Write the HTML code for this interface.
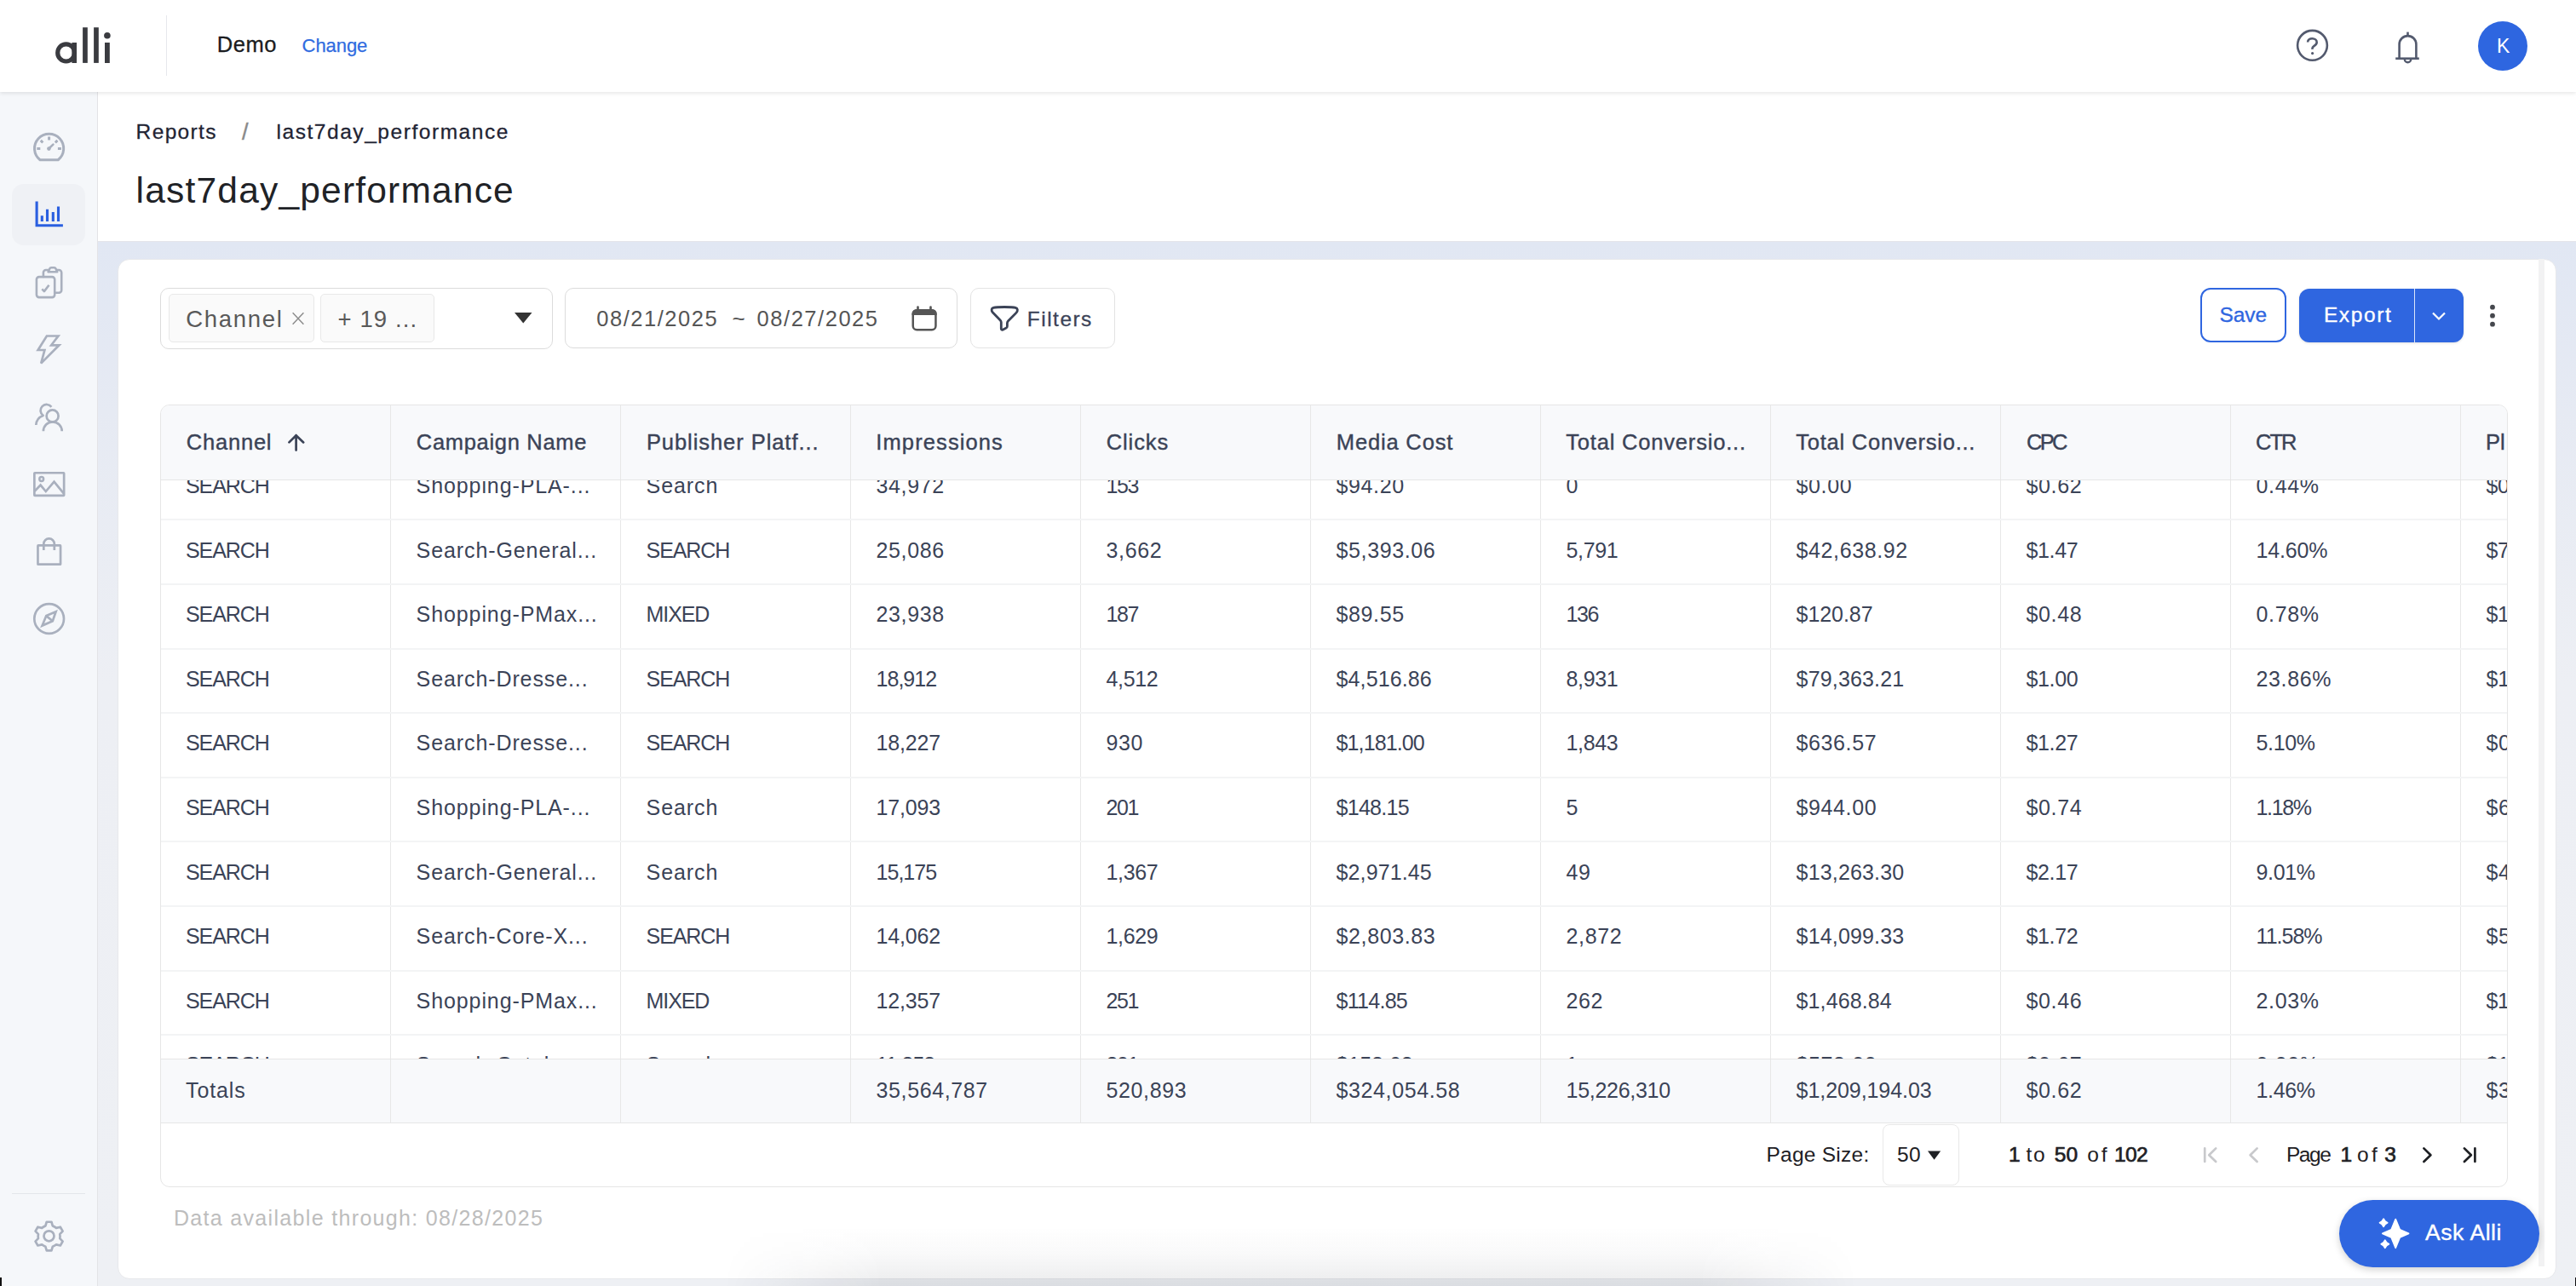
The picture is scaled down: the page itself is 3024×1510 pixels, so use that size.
<!DOCTYPE html><html><head><meta charset="utf-8"><style>
*{box-sizing:border-box;margin:0;padding:0}
html,body{width:3024px;height:1510px;overflow:hidden;background:#eef0f4;font-family:"Liberation Sans", sans-serif;}
.a{position:absolute}
.t{position:absolute;white-space:nowrap;line-height:1}
</style></head><body><div class="a" style="left:114px;top:284px;width:2910px;height:1226px;background:linear-gradient(180deg,#e1e7f3 0px,#e6eaf3 200px,#edeff4 520px,#eef0f4 1226px)"></div>
<div class="a" style="left:114px;top:108px;width:2910px;height:176px;background:#fff;border-bottom:1px solid #e4e5ea"></div>
<div class="a" style="left:0;top:108px;width:115px;height:1402px;background:#f5f7fa;border-right:1.5px solid #e3e3e6"></div>
<div class="a" style="left:0;top:0;width:3024px;height:108px;background:#fff;box-shadow:0 1px 5px rgba(0,0,0,0.12)"></div>
<svg class="a" style="left:0;top:0" width="200" height="108" viewBox="0 0 200 108">
<g fill="#3a3b40"><ellipse cx="77.6" cy="61.9" rx="9.9" ry="10.1" fill="none" stroke="#3a3b40" stroke-width="5.2"/>
<rect x="84.4" y="50" width="5.6" height="24"/><rect x="97.1" y="32.2" width="5.7" height="41.7"/><rect x="110.1" y="32.2" width="5.7" height="41.7"/>
<rect x="123" y="50" width="5.8" height="24"/><circle cx="125.9" cy="41.7" r="3.8"/></g></svg>
<div class="a" style="left:194.5px;top:18px;width:1.5px;height:71px;background:#e6e8ec"></div>
<div class="t" style="left:254.70px;top:39.91px;font-size:25.5px;letter-spacing:0.57px;color:#1b1c20;-webkit-text-stroke:0.3px #1b1c20">Demo</div>
<div class="t" style="left:354.60px;top:42.87px;font-size:22px;letter-spacing:-0.06px;color:#2f6be0;-webkit-text-stroke:0.25px #2f6be0">Change</div>
<svg class="a" style="left:2690px;top:29px" width="50" height="50" viewBox="0 0 50 50">
<circle cx="24.5" cy="24.3" r="17.4" fill="none" stroke="#535a6e" stroke-width="2.6"/>
<path d="M19.1 20.6C19.1 17.8 21.5 16.3 24.4 16.3C27.4 16.3 29.7 18.1 29.7 20.7C29.7 23.2 27.6 24.3 26 25.3C24.8 26.1 24.4 27 24.3 28.9" fill="none" stroke="#535a6e" stroke-width="2.6" stroke-linecap="butt"/>
<circle cx="24.6" cy="33.6" r="1.6" fill="#535a6e"/></svg>
<svg class="a" style="left:2800px;top:30px" width="52" height="50" viewBox="0 0 52 50" fill="none" stroke="#535a6e" stroke-width="2.6">
<path d="M16.6 38.5V22A9.9 9.9 0 0 1 36.4 22V38.5"/>
<path d="M12.2 38.7H39.8"/>
<path d="M26.5 12.2V7.6"/>
<path d="M22.8 39.6a3.7 3.7 0 0 0 7.4 0" stroke-width="2.4"/></svg>
<div class="a" style="left:2909px;top:25px;width:58px;height:58px;border-radius:50%;background:#2e66e0"></div>
<div class="t" style="left:2931.10px;top:42.73px;font-size:23.00px;color:#fff;">K</div>
<div class="a" style="left:14px;top:216px;width:86px;height:72px;border-radius:14px;background:#eff1f5"></div>
<svg class="a" style="left:0;top:108px" width="114" height="1402" viewBox="0 108 114 1402" fill="none" stroke="#a9b0be" stroke-width="2.8" stroke-linecap="round" stroke-linejoin="round">
<!-- gauge -->
<path d="M47 187.8A17.1 17.1 0 1 1 68.2 187.8Z" stroke-width="3"/>
<path d="M57.6 160.6v3.9M47.8 164.9l2.5 2.6M67.4 164.9l-2.5 2.6M43.3 174.6h4M67.9 174.6h4" stroke-width="3" stroke-linecap="butt"/>
<path d="M57.8 174l4.6-4.4" stroke-width="2.6"/>
<circle cx="57.4" cy="174.6" r="2.3" fill="#a9b0be" stroke="none"/>
<!-- chart (active) -->
<g stroke="#2a5fe0" stroke-width="3.1" stroke-linecap="butt" stroke-linejoin="miter"><path d="M43.1 236.5V264.7H73.9"/><path d="M49.3 259.9v-6.7M55.5 259.9v-14.1M62.3 259.9v-10.8M68.5 259.9v-17.4"/></g>
<!-- clipboard -->
<rect x="42.9" y="325.1" width="21.3" height="24" rx="3" stroke-width="2.6"/>
<path d="M50.9 325V320a3 3 0 0 1 3-3H56.5M66.8 317H69.2a3 3 0 0 1 3 3V340.7a3 3 0 0 1-3 3H64.5" stroke-width="2.6"/>
<path d="M56.6 319.3h10.6l-1.7-3.8a2 2 0 0 0-1.8-1.2h-3.6a2 2 0 0 0-1.8 1.2z" stroke-width="2.6"/>
<path d="M49.3 339.4l2.6 2.7 5.6-7.4" stroke-width="2.6" stroke-linecap="butt"/>
<!-- bolt -->
<path d="M54.9 394.5H68.4L60.2 405.3H69.4L48.2 426.6L52.4 411H44.6Z" stroke-width="2.7" stroke-linejoin="miter" stroke-miterlimit="3"/>
<!-- users -->
<g stroke-width="2.7" stroke-linecap="butt">
<circle cx="61.6" cy="488.4" r="7"/>
<path d="M50.9 506.2A10.9 10.9 0 0 1 72.7 506.2"/>
<path d="M60.4 477.9A7.1 7.1 0 1 0 50.6 487.9C45 490 42.5 494 42.3 499"/>
</g>
<!-- image -->
<g stroke-width="2.7" stroke-linejoin="miter" stroke-linecap="butt">
<rect x="40.35" y="555.25" width="34.8" height="26.7" rx="0.6"/>
<circle cx="48.7" cy="562.5" r="2.4" stroke-width="2.5"/>
<path d="M40.6 576.8L47.6 569.6 53.8 577 63.5 565.6 75 579.6"/>
</g>
<!-- bag -->
<g stroke-width="2.7" stroke-linejoin="miter" stroke-linecap="butt">
<rect x="44.45" y="640.45" width="26.6" height="22.2" rx="0.5"/>
<path d="M51.3 645.9V638.6a6.25 6.25 0 0 1 12.5 0V645.9"/>
</g>
<!-- compass -->
<g stroke-width="2.7" stroke-linejoin="miter" stroke-linecap="butt">
<circle cx="57.65" cy="726.5" r="17.35"/>
<path d="M65.6 718.2L54.3 723.1 49.6 734.6 61.8 729.2Z"/>
<path d="M54.3 723.1L61.8 729.2"/>
</g>
<!-- gear -->
<path d="M53.40 1439.40L54.78 1434.73L60.42 1434.73L61.80 1439.40A12.9 12.9 0 0 1 66.06 1441.86L70.79 1440.72L73.62 1445.61L70.26 1449.14A12.9 12.9 0 0 1 70.26 1454.06L73.62 1457.59L70.79 1462.48L66.06 1461.34A12.9 12.9 0 0 1 61.80 1463.80L60.42 1468.47L54.78 1468.47L53.40 1463.80A12.9 12.9 0 0 1 49.14 1461.34L44.41 1462.48L41.58 1457.59L44.94 1454.06A12.9 12.9 0 0 1 44.94 1449.14L41.58 1445.61L44.41 1440.72L49.14 1441.86A12.9 12.9 0 0 1 53.40 1439.40Z" stroke-width="2.7" stroke-linejoin="round"/>
<circle cx="57.5" cy="1451.3" r="6" stroke-width="2.7"/>
</svg>
<div class="a" style="left:14px;top:1400.5px;width:86px;height:1.5px;background:#e3e6eb"></div>
<div class="t" style="left:159.60px;top:143.26px;font-size:24.5px;letter-spacing:1.36px;color:#1f2433;-webkit-text-stroke:0.3px #1f2433">Reports</div>
<div class="t" style="left:283.90px;top:142.44px;font-size:27.00px;color:#8a8a8a;-webkit-text-stroke:0.4px #8a8a8a">/</div>
<div class="t" style="left:324.50px;top:143.26px;font-size:24.5px;letter-spacing:1.55px;color:#1f2433;-webkit-text-stroke:0.3px #1f2433">last7day_performance</div>
<div class="t" style="left:159.60px;top:202.62px;font-size:42.5px;letter-spacing:1.19px;color:#202226;">last7day_performance</div>
<div class="a" style="left:138px;top:303.5px;width:2863px;height:1198.5px;border-radius:14px;background:#fff;border:1px solid #e7e8eb"></div>
<div class="a" style="left:2980px;top:304px;width:7px;height:1183px;background:#f2f2f3"></div>
<div class="a" style="left:188px;top:338px;width:461px;height:72px;border:1.5px solid #dcdcdc;border-radius:10px;background:#fff"></div>
<div class="a" style="left:198px;top:345px;width:171px;height:57px;border:1.5px solid #e8e8e8;border-radius:5px;background:#fafafa"></div>
<div class="a" style="left:376px;top:345px;width:134px;height:57px;border:1.5px solid #e8e8e8;border-radius:5px;background:#fafafa"></div>
<div class="t" style="left:218.30px;top:360.82px;font-size:27.5px;letter-spacing:1.68px;color:#595959;">Channel</div>
<svg class="a" style="left:340px;top:364px" width="20" height="20" viewBox="0 0 20 20"><path d="M3.6 3.2l12.8 13.6M16.4 3.2L3.6 16.8" stroke="#8a8a8a" stroke-width="1.4"/></svg>
<div class="t" style="left:396.50px;top:360.82px;font-size:27.5px;letter-spacing:1.12px;color:#595959;">+ 19 ...</div>
<svg class="a" style="left:604px;top:367px" width="21" height="13" viewBox="0 0 21 13"><path d="M0 0h20.5L10.25 12.5z" fill="#333"/></svg>
<div class="a" style="left:663px;top:338px;width:461px;height:71px;border:1.5px solid #dcdcdc;border-radius:10px;background:#fff"></div>
<div class="t" style="left:700.30px;top:361.71px;font-size:25.5px;letter-spacing:1.52px;color:#555;">08/21/2025</div>
<div class="t" style="left:859.60px;top:361.29px;font-size:26.00px;color:#555;">~</div>
<div class="t" style="left:888.60px;top:361.71px;font-size:25.5px;letter-spacing:1.53px;color:#555;">08/27/2025</div>
<svg class="a" style="left:1068px;top:357px" width="34" height="34" viewBox="1068 357 34 34">
<rect x="1071.75" y="364.25" width="26.7" height="23" rx="4.5" fill="none" stroke="#555" stroke-width="2.5"/>
<path d="M1070.5 368.5a5.5 5.5 0 0 1 5.5-5.5h18.2a5.5 5.5 0 0 1 5.5 5.5v1.4h-29.2z" fill="#555"/>
<path d="M1077.5 360.6v3.6M1092.5 360.6v3.6" stroke="#555" stroke-width="2.6" stroke-linecap="round"/></svg>
<div class="a" style="left:1139px;top:338px;width:170px;height:71px;border:1.5px solid #e3e3e3;border-radius:10px;background:#fff"></div>
<svg class="a" style="left:1160px;top:356px" width="38" height="36" viewBox="1160 356 38 36"><path d="M1166 361.3C1170.5 360.2 1188 360.2 1192.3 361.3C1194.9 362 1195 365.1 1193.1 367.1L1183.6 376.7C1182.8 377.5 1182.4 378.4 1182.4 379.5V382.9C1182.4 384 1181.8 384.9 1180.9 385.3L1177.1 387.2C1176.1 387.7 1175.3 387.1 1175.3 386V378.6C1175.3 377.5 1174.9 376.6 1174.2 375.9L1165.5 367.1C1163.5 365.1 1163.6 362 1166 361.3Z" fill="none" stroke="#3b4357" stroke-width="2.8" stroke-linejoin="round"/></svg>
<div class="t" style="left:1205.80px;top:362.56px;font-size:24.5px;letter-spacing:1.48px;color:#3b4357;-webkit-text-stroke:0.3px #3b4357">Filters</div>
<div class="a" style="left:2583px;top:338px;width:101px;height:64px;border:2px solid #2f66e0;border-radius:12px;background:#fff"></div>
<div class="t" style="left:2605.40px;top:358.46px;font-size:24.5px;letter-spacing:-0.02px;color:#2f66e0;-webkit-text-stroke:0.35px #2f66e0">Save</div>
<div class="a" style="left:2699px;top:339px;width:193px;height:63px;border-radius:12px;background:#2f66e0;box-shadow:0 1px 3px rgba(0,0,0,0.12)"></div>
<div class="a" style="left:2834px;top:339px;width:1px;height:63px;background:#dce5fa"></div>
<div class="t" style="left:2727.90px;top:358.46px;font-size:24.5px;letter-spacing:1.62px;color:#fff;-webkit-text-stroke:0.35px #fff">Export</div>
<svg class="a" style="left:2853px;top:364px" width="20" height="14" viewBox="0 0 20 14"><path d="M3 3.5l7 7 7-7" fill="none" stroke="#fff" stroke-width="2.2"/></svg>
<svg class="a" style="left:2918px;top:354px" width="16" height="34" viewBox="0 0 16 34"><g fill="#45474d"><circle cx="8" cy="6.7" r="2.9"/><circle cx="8" cy="16.7" r="2.9"/><circle cx="8" cy="26.7" r="2.9"/></g></svg>
<div class="a" style="left:188px;top:475px;width:2756px;height:919px;border:1px solid #e6e6e6;border-radius:11px;background:#fff;overflow:hidden">
<div class="a" style="left:0;top:0;width:3000px;height:87px;background:#f8f9fb;z-index:2"></div>
<div class="a" style="left:0;top:88px;width:3000px;height:679px;overflow:hidden">
<div class="a" style="left:269px;top:0;width:1px;height:2000px;background:#e7e7e7"></div>
<div class="a" style="left:539px;top:0;width:1px;height:2000px;background:#e7e7e7"></div>
<div class="a" style="left:809px;top:0;width:1px;height:2000px;background:#e7e7e7"></div>
<div class="a" style="left:1079px;top:0;width:1px;height:2000px;background:#e7e7e7"></div>
<div class="a" style="left:1349px;top:0;width:1px;height:2000px;background:#e7e7e7"></div>
<div class="a" style="left:1619px;top:0;width:1px;height:2000px;background:#e7e7e7"></div>
<div class="a" style="left:1889px;top:0;width:1px;height:2000px;background:#e7e7e7"></div>
<div class="a" style="left:2159px;top:0;width:1px;height:2000px;background:#e7e7e7"></div>
<div class="a" style="left:2429px;top:0;width:1px;height:2000px;background:#e7e7e7"></div>
<div class="a" style="left:2699px;top:0;width:1px;height:2000px;background:#e7e7e7"></div>
<div class="a" style="left:0;top:45.30px;width:3000px;height:2px;background:#f3f4f5"></div>
<div class="t" style="left:29.00px;top:-5.97px;font-size:25px;letter-spacing:-1.10px;color:#3b4357;">SEARCH</div>
<div class="t" style="left:299.60px;top:-5.97px;font-size:25px;letter-spacing:0.90px;color:#3b4357;">Shopping-PLA-...</div>
<div class="t" style="left:569.60px;top:-5.97px;font-size:25px;letter-spacing:0.90px;color:#3b4357;">Search</div>
<div class="t" style="left:839.60px;top:-5.97px;font-size:25px;letter-spacing:0.60px;color:#3b4357;">34,972</div>
<div class="t" style="left:1109.60px;top:-5.97px;font-size:25px;letter-spacing:-1.40px;color:#3b4357;">153</div>
<div class="t" style="left:1379.60px;top:-5.97px;font-size:25px;letter-spacing:0.60px;color:#3b4357;">$94.20</div>
<div class="t" style="left:1649.60px;top:-5.97px;font-size:25px;letter-spacing:0.60px;color:#3b4357;">0</div>
<div class="t" style="left:1919.60px;top:-5.97px;font-size:25px;letter-spacing:0.60px;color:#3b4357;">$0.00</div>
<div class="t" style="left:2189.60px;top:-5.97px;font-size:25px;letter-spacing:0.60px;color:#3b4357;">$0.62</div>
<div class="t" style="left:2459.60px;top:-5.97px;font-size:25px;letter-spacing:0.60px;color:#3b4357;">0.44%</div>
<div class="t" style="left:2729.60px;top:-5.97px;font-size:25px;letter-spacing:-0.40px;color:#3b4357;">$0.18</div>
<div class="a" style="left:0;top:120.90px;width:3000px;height:2px;background:#f3f4f5"></div>
<div class="t" style="left:29.00px;top:69.63px;font-size:25px;letter-spacing:-1.10px;color:#3b4357;">SEARCH</div>
<div class="t" style="left:299.60px;top:69.63px;font-size:25px;letter-spacing:0.90px;color:#3b4357;">Search-General...</div>
<div class="t" style="left:569.60px;top:69.63px;font-size:25px;letter-spacing:-1.10px;color:#3b4357;">SEARCH</div>
<div class="t" style="left:839.60px;top:69.63px;font-size:25px;letter-spacing:0.60px;color:#3b4357;">25,086</div>
<div class="t" style="left:1109.60px;top:69.63px;font-size:25px;letter-spacing:0.60px;color:#3b4357;">3,662</div>
<div class="t" style="left:1379.60px;top:69.63px;font-size:25px;letter-spacing:0.60px;color:#3b4357;">$5,393.06</div>
<div class="t" style="left:1649.60px;top:69.63px;font-size:25px;letter-spacing:-0.40px;color:#3b4357;">5,791</div>
<div class="t" style="left:1919.60px;top:69.63px;font-size:25px;letter-spacing:0.60px;color:#3b4357;">$42,638.92</div>
<div class="t" style="left:2189.60px;top:69.63px;font-size:25px;letter-spacing:-0.40px;color:#3b4357;">$1.47</div>
<div class="t" style="left:2459.60px;top:69.63px;font-size:25px;letter-spacing:-0.20px;color:#3b4357;">14.60%</div>
<div class="t" style="left:2729.60px;top:69.63px;font-size:25px;letter-spacing:-0.40px;color:#3b4357;">$7.91</div>
<div class="a" style="left:0;top:196.50px;width:3000px;height:2px;background:#f3f4f5"></div>
<div class="t" style="left:29.00px;top:145.23px;font-size:25px;letter-spacing:-1.10px;color:#3b4357;">SEARCH</div>
<div class="t" style="left:299.60px;top:145.23px;font-size:25px;letter-spacing:0.90px;color:#3b4357;">Shopping-PMax...</div>
<div class="t" style="left:569.60px;top:145.23px;font-size:25px;letter-spacing:-1.10px;color:#3b4357;">MIXED</div>
<div class="t" style="left:839.60px;top:145.23px;font-size:25px;letter-spacing:0.60px;color:#3b4357;">23,938</div>
<div class="t" style="left:1109.60px;top:145.23px;font-size:25px;letter-spacing:-1.40px;color:#3b4357;">187</div>
<div class="t" style="left:1379.60px;top:145.23px;font-size:25px;letter-spacing:0.60px;color:#3b4357;">$89.55</div>
<div class="t" style="left:1649.60px;top:145.23px;font-size:25px;letter-spacing:-1.40px;color:#3b4357;">136</div>
<div class="t" style="left:1919.60px;top:145.23px;font-size:25px;letter-spacing:-0.07px;color:#3b4357;">$120.87</div>
<div class="t" style="left:2189.60px;top:145.23px;font-size:25px;letter-spacing:0.60px;color:#3b4357;">$0.48</div>
<div class="t" style="left:2459.60px;top:145.23px;font-size:25px;letter-spacing:0.60px;color:#3b4357;">0.78%</div>
<div class="t" style="left:2729.60px;top:145.23px;font-size:25px;letter-spacing:-0.40px;color:#3b4357;">$1.35</div>
<div class="a" style="left:0;top:272.10px;width:3000px;height:2px;background:#f3f4f5"></div>
<div class="t" style="left:29.00px;top:220.83px;font-size:25px;letter-spacing:-1.10px;color:#3b4357;">SEARCH</div>
<div class="t" style="left:299.60px;top:220.83px;font-size:25px;letter-spacing:0.90px;color:#3b4357;">Search-Dresse...</div>
<div class="t" style="left:569.60px;top:220.83px;font-size:25px;letter-spacing:-1.10px;color:#3b4357;">SEARCH</div>
<div class="t" style="left:839.60px;top:220.83px;font-size:25px;letter-spacing:-1.00px;color:#3b4357;">18,912</div>
<div class="t" style="left:1109.60px;top:220.83px;font-size:25px;letter-spacing:-0.40px;color:#3b4357;">4,512</div>
<div class="t" style="left:1379.60px;top:220.83px;font-size:25px;letter-spacing:0.10px;color:#3b4357;">$4,516.86</div>
<div class="t" style="left:1649.60px;top:220.83px;font-size:25px;letter-spacing:-0.40px;color:#3b4357;">8,931</div>
<div class="t" style="left:1919.60px;top:220.83px;font-size:25px;letter-spacing:0.16px;color:#3b4357;">$79,363.21</div>
<div class="t" style="left:2189.60px;top:220.83px;font-size:25px;letter-spacing:-0.40px;color:#3b4357;">$1.00</div>
<div class="t" style="left:2459.60px;top:220.83px;font-size:25px;letter-spacing:0.60px;color:#3b4357;">23.86%</div>
<div class="t" style="left:2729.60px;top:220.83px;font-size:25px;letter-spacing:-0.20px;color:#3b4357;">$17.59</div>
<div class="a" style="left:0;top:347.70px;width:3000px;height:2px;background:#f3f4f5"></div>
<div class="t" style="left:29.00px;top:296.43px;font-size:25px;letter-spacing:-1.10px;color:#3b4357;">SEARCH</div>
<div class="t" style="left:299.60px;top:296.43px;font-size:25px;letter-spacing:0.90px;color:#3b4357;">Search-Dresse...</div>
<div class="t" style="left:569.60px;top:296.43px;font-size:25px;letter-spacing:-1.10px;color:#3b4357;">SEARCH</div>
<div class="t" style="left:839.60px;top:296.43px;font-size:25px;letter-spacing:-0.20px;color:#3b4357;">18,227</div>
<div class="t" style="left:1109.60px;top:296.43px;font-size:25px;letter-spacing:0.60px;color:#3b4357;">930</div>
<div class="t" style="left:1379.60px;top:296.43px;font-size:25px;letter-spacing:-0.90px;color:#3b4357;">$1,181.00</div>
<div class="t" style="left:1649.60px;top:296.43px;font-size:25px;letter-spacing:-0.40px;color:#3b4357;">1,843</div>
<div class="t" style="left:1919.60px;top:296.43px;font-size:25px;letter-spacing:0.60px;color:#3b4357;">$636.57</div>
<div class="t" style="left:2189.60px;top:296.43px;font-size:25px;letter-spacing:-0.40px;color:#3b4357;">$1.27</div>
<div class="t" style="left:2459.60px;top:296.43px;font-size:25px;letter-spacing:-0.40px;color:#3b4357;">5.10%</div>
<div class="t" style="left:2729.60px;top:296.43px;font-size:25px;letter-spacing:0.60px;color:#3b4357;">$0.54</div>
<div class="a" style="left:0;top:423.30px;width:3000px;height:2px;background:#f3f4f5"></div>
<div class="t" style="left:29.00px;top:372.03px;font-size:25px;letter-spacing:-1.10px;color:#3b4357;">SEARCH</div>
<div class="t" style="left:299.60px;top:372.03px;font-size:25px;letter-spacing:0.90px;color:#3b4357;">Shopping-PLA-...</div>
<div class="t" style="left:569.60px;top:372.03px;font-size:25px;letter-spacing:0.90px;color:#3b4357;">Search</div>
<div class="t" style="left:839.60px;top:372.03px;font-size:25px;letter-spacing:-0.20px;color:#3b4357;">17,093</div>
<div class="t" style="left:1109.60px;top:372.03px;font-size:25px;letter-spacing:-1.40px;color:#3b4357;">201</div>
<div class="t" style="left:1379.60px;top:372.03px;font-size:25px;letter-spacing:-0.73px;color:#3b4357;">$148.15</div>
<div class="t" style="left:1649.60px;top:372.03px;font-size:25px;letter-spacing:0.60px;color:#3b4357;">5</div>
<div class="t" style="left:1919.60px;top:372.03px;font-size:25px;letter-spacing:0.60px;color:#3b4357;">$944.00</div>
<div class="t" style="left:2189.60px;top:372.03px;font-size:25px;letter-spacing:0.60px;color:#3b4357;">$0.74</div>
<div class="t" style="left:2459.60px;top:372.03px;font-size:25px;letter-spacing:-1.40px;color:#3b4357;">1.18%</div>
<div class="t" style="left:2729.60px;top:372.03px;font-size:25px;letter-spacing:0.60px;color:#3b4357;">$6.37</div>
<div class="a" style="left:0;top:498.90px;width:3000px;height:2px;background:#f3f4f5"></div>
<div class="t" style="left:29.00px;top:447.63px;font-size:25px;letter-spacing:-1.10px;color:#3b4357;">SEARCH</div>
<div class="t" style="left:299.60px;top:447.63px;font-size:25px;letter-spacing:0.90px;color:#3b4357;">Search-General...</div>
<div class="t" style="left:569.60px;top:447.63px;font-size:25px;letter-spacing:0.90px;color:#3b4357;">Search</div>
<div class="t" style="left:839.60px;top:447.63px;font-size:25px;letter-spacing:-1.00px;color:#3b4357;">15,175</div>
<div class="t" style="left:1109.60px;top:447.63px;font-size:25px;letter-spacing:-0.40px;color:#3b4357;">1,367</div>
<div class="t" style="left:1379.60px;top:447.63px;font-size:25px;letter-spacing:0.10px;color:#3b4357;">$2,971.45</div>
<div class="t" style="left:1649.60px;top:447.63px;font-size:25px;letter-spacing:0.60px;color:#3b4357;">49</div>
<div class="t" style="left:1919.60px;top:447.63px;font-size:25px;letter-spacing:0.16px;color:#3b4357;">$13,263.30</div>
<div class="t" style="left:2189.60px;top:447.63px;font-size:25px;letter-spacing:-0.40px;color:#3b4357;">$2.17</div>
<div class="t" style="left:2459.60px;top:447.63px;font-size:25px;letter-spacing:-0.40px;color:#3b4357;">9.01%</div>
<div class="t" style="left:2729.60px;top:447.63px;font-size:25px;letter-spacing:0.60px;color:#3b4357;">$4.46</div>
<div class="a" style="left:0;top:574.50px;width:3000px;height:2px;background:#f3f4f5"></div>
<div class="t" style="left:29.00px;top:523.23px;font-size:25px;letter-spacing:-1.10px;color:#3b4357;">SEARCH</div>
<div class="t" style="left:299.60px;top:523.23px;font-size:25px;letter-spacing:0.90px;color:#3b4357;">Search-Core-X...</div>
<div class="t" style="left:569.60px;top:523.23px;font-size:25px;letter-spacing:-1.10px;color:#3b4357;">SEARCH</div>
<div class="t" style="left:839.60px;top:523.23px;font-size:25px;letter-spacing:-0.20px;color:#3b4357;">14,062</div>
<div class="t" style="left:1109.60px;top:523.23px;font-size:25px;letter-spacing:-0.40px;color:#3b4357;">1,629</div>
<div class="t" style="left:1379.60px;top:523.23px;font-size:25px;letter-spacing:0.60px;color:#3b4357;">$2,803.83</div>
<div class="t" style="left:1649.60px;top:523.23px;font-size:25px;letter-spacing:0.60px;color:#3b4357;">2,872</div>
<div class="t" style="left:1919.60px;top:523.23px;font-size:25px;letter-spacing:0.16px;color:#3b4357;">$14,099.33</div>
<div class="t" style="left:2189.60px;top:523.23px;font-size:25px;letter-spacing:-0.40px;color:#3b4357;">$1.72</div>
<div class="t" style="left:2459.60px;top:523.23px;font-size:25px;letter-spacing:-1.00px;color:#3b4357;">11.58%</div>
<div class="t" style="left:2729.60px;top:523.23px;font-size:25px;letter-spacing:0.60px;color:#3b4357;">$5.03</div>
<div class="a" style="left:0;top:650.10px;width:3000px;height:2px;background:#f3f4f5"></div>
<div class="t" style="left:29.00px;top:598.83px;font-size:25px;letter-spacing:-1.10px;color:#3b4357;">SEARCH</div>
<div class="t" style="left:299.60px;top:598.83px;font-size:25px;letter-spacing:0.90px;color:#3b4357;">Shopping-PMax...</div>
<div class="t" style="left:569.60px;top:598.83px;font-size:25px;letter-spacing:-1.10px;color:#3b4357;">MIXED</div>
<div class="t" style="left:839.60px;top:598.83px;font-size:25px;letter-spacing:-0.20px;color:#3b4357;">12,357</div>
<div class="t" style="left:1109.60px;top:598.83px;font-size:25px;letter-spacing:-1.40px;color:#3b4357;">251</div>
<div class="t" style="left:1379.60px;top:598.83px;font-size:25px;letter-spacing:-0.73px;color:#3b4357;">$114.85</div>
<div class="t" style="left:1649.60px;top:598.83px;font-size:25px;letter-spacing:0.60px;color:#3b4357;">262</div>
<div class="t" style="left:1919.60px;top:598.83px;font-size:25px;letter-spacing:0.10px;color:#3b4357;">$1,468.84</div>
<div class="t" style="left:2189.60px;top:598.83px;font-size:25px;letter-spacing:0.60px;color:#3b4357;">$0.46</div>
<div class="t" style="left:2459.60px;top:598.83px;font-size:25px;letter-spacing:0.60px;color:#3b4357;">2.03%</div>
<div class="t" style="left:2729.60px;top:598.83px;font-size:25px;letter-spacing:-0.40px;color:#3b4357;">$1.28</div>
<div class="a" style="left:0;top:725.70px;width:3000px;height:2px;background:#f3f4f5"></div>
<div class="t" style="left:29.00px;top:674.43px;font-size:25px;letter-spacing:-1.10px;color:#3b4357;">SEARCH</div>
<div class="t" style="left:299.60px;top:674.43px;font-size:25px;letter-spacing:0.90px;color:#3b4357;">Search-Catal...</div>
<div class="t" style="left:569.60px;top:674.43px;font-size:25px;letter-spacing:0.90px;color:#3b4357;">Search</div>
<div class="t" style="left:839.60px;top:674.43px;font-size:25px;letter-spacing:-1.00px;color:#3b4357;">11,858</div>
<div class="t" style="left:1109.60px;top:674.43px;font-size:25px;letter-spacing:-1.40px;color:#3b4357;">201</div>
<div class="t" style="left:1379.60px;top:674.43px;font-size:25px;letter-spacing:-0.07px;color:#3b4357;">$158.63</div>
<div class="t" style="left:1649.60px;top:674.43px;font-size:25px;letter-spacing:-3.40px;color:#3b4357;">1</div>
<div class="t" style="left:1919.60px;top:674.43px;font-size:25px;letter-spacing:0.60px;color:#3b4357;">$578.00</div>
<div class="t" style="left:2189.60px;top:674.43px;font-size:25px;letter-spacing:0.60px;color:#3b4357;">$0.67</div>
<div class="t" style="left:2459.60px;top:674.43px;font-size:25px;letter-spacing:0.60px;color:#3b4357;">0.00%</div>
<div class="t" style="left:2729.60px;top:674.43px;font-size:25px;letter-spacing:-0.40px;color:#3b4357;">$1.49</div>
</div>
<div class="a" style="left:0;top:87px;width:3000px;height:1px;background:#e6e6e6;z-index:4"></div>
<div class="a" style="left:269px;top:0;width:1px;height:87px;background:#e7e7e7;z-index:4"></div>
<div class="a" style="left:539px;top:0;width:1px;height:87px;background:#e7e7e7;z-index:4"></div>
<div class="a" style="left:809px;top:0;width:1px;height:87px;background:#e7e7e7;z-index:4"></div>
<div class="a" style="left:1079px;top:0;width:1px;height:87px;background:#e7e7e7;z-index:4"></div>
<div class="a" style="left:1349px;top:0;width:1px;height:87px;background:#e7e7e7;z-index:4"></div>
<div class="a" style="left:1619px;top:0;width:1px;height:87px;background:#e7e7e7;z-index:4"></div>
<div class="a" style="left:1889px;top:0;width:1px;height:87px;background:#e7e7e7;z-index:4"></div>
<div class="a" style="left:2159px;top:0;width:1px;height:87px;background:#e7e7e7;z-index:4"></div>
<div class="a" style="left:2429px;top:0;width:1px;height:87px;background:#e7e7e7;z-index:4"></div>
<div class="a" style="left:2699px;top:0;width:1px;height:87px;background:#e7e7e7;z-index:4"></div>
<div class="a" style="left:0;top:767px;width:3000px;height:76px;background:#f8f9fb;border-top:1px solid #e6e6e6;border-bottom:1px solid #e6e6e6;z-index:2"></div>
<div class="a" style="left:269px;top:768px;width:1px;height:74px;background:#e7e7e7;z-index:4"></div>
<div class="a" style="left:539px;top:768px;width:1px;height:74px;background:#e7e7e7;z-index:4"></div>
<div class="a" style="left:809px;top:768px;width:1px;height:74px;background:#e7e7e7;z-index:4"></div>
<div class="a" style="left:1079px;top:768px;width:1px;height:74px;background:#e7e7e7;z-index:4"></div>
<div class="a" style="left:1349px;top:768px;width:1px;height:74px;background:#e7e7e7;z-index:4"></div>
<div class="a" style="left:1619px;top:768px;width:1px;height:74px;background:#e7e7e7;z-index:4"></div>
<div class="a" style="left:1889px;top:768px;width:1px;height:74px;background:#e7e7e7;z-index:4"></div>
<div class="a" style="left:2159px;top:768px;width:1px;height:74px;background:#e7e7e7;z-index:4"></div>
<div class="a" style="left:2429px;top:768px;width:1px;height:74px;background:#e7e7e7;z-index:4"></div>
<div class="a" style="left:2699px;top:768px;width:1px;height:74px;background:#e7e7e7;z-index:4"></div>
<div class="t" style="left:29.00px;top:791.63px;font-size:25px;letter-spacing:0.90px;color:#3b4357;z-index:3">Totals</div>
<div class="t" style="left:839.60px;top:791.63px;font-size:25px;letter-spacing:0.60px;color:#3b4357;z-index:3">35,564,787</div>
<div class="t" style="left:1109.60px;top:791.63px;font-size:25px;letter-spacing:0.60px;color:#3b4357;z-index:3">520,893</div>
<div class="t" style="left:1379.60px;top:791.63px;font-size:25px;letter-spacing:0.60px;color:#3b4357;z-index:3">$324,054.58</div>
<div class="t" style="left:1649.60px;top:791.63px;font-size:25px;letter-spacing:-0.29px;color:#3b4357;z-index:3">15,226,310</div>
<div class="t" style="left:1919.60px;top:791.63px;font-size:25px;letter-spacing:-0.07px;color:#3b4357;z-index:3">$1,209,194.03</div>
<div class="t" style="left:2189.60px;top:791.63px;font-size:25px;letter-spacing:0.60px;color:#3b4357;z-index:3">$0.62</div>
<div class="t" style="left:2459.60px;top:791.63px;font-size:25px;letter-spacing:-0.40px;color:#3b4357;z-index:3">1.46%</div>
<div class="t" style="left:2729.60px;top:791.63px;font-size:25px;letter-spacing:0.60px;color:#3b4357;z-index:3">$3.73</div>
<div class="t" style="left:29.80px;top:31.01px;font-size:25.5px;letter-spacing:0.79px;color:#3b4357;z-index:3;-webkit-text-stroke:0.4px #3b4357">Channel</div>
<div class="t" style="left:299.80px;top:31.01px;font-size:25.5px;letter-spacing:0.69px;color:#3b4357;z-index:3;-webkit-text-stroke:0.4px #3b4357">Campaign Name</div>
<div class="t" style="left:569.90px;top:31.01px;font-size:25.5px;letter-spacing:0.94px;color:#3b4357;z-index:3;-webkit-text-stroke:0.4px #3b4357">Publisher Platf...</div>
<div class="t" style="left:839.30px;top:31.01px;font-size:25.5px;letter-spacing:1.11px;color:#3b4357;z-index:3;-webkit-text-stroke:0.4px #3b4357">Impressions</div>
<div class="t" style="left:1109.70px;top:31.01px;font-size:25.5px;letter-spacing:0.91px;color:#3b4357;z-index:3;-webkit-text-stroke:0.4px #3b4357">Clicks</div>
<div class="t" style="left:1379.80px;top:31.01px;font-size:25.5px;letter-spacing:0.84px;color:#3b4357;z-index:3;-webkit-text-stroke:0.4px #3b4357">Media Cost</div>
<div class="t" style="left:1649.30px;top:31.01px;font-size:25.5px;letter-spacing:0.81px;color:#3b4357;z-index:3;-webkit-text-stroke:0.4px #3b4357">Total Conversio...</div>
<div class="t" style="left:1919.20px;top:31.01px;font-size:25.5px;letter-spacing:0.78px;color:#3b4357;z-index:3;-webkit-text-stroke:0.4px #3b4357">Total Conversio...</div>
<div class="t" style="left:2190.10px;top:31.01px;font-size:25.5px;letter-spacing:-2.75px;color:#3b4357;z-index:3;-webkit-text-stroke:0.4px #3b4357">CPC</div>
<div class="t" style="left:2459.10px;top:31.01px;font-size:25.5px;letter-spacing:-2.05px;color:#3b4357;z-index:3;-webkit-text-stroke:0.4px #3b4357">CTR</div>
<div class="t" style="left:2729.00px;top:31.01px;font-size:25.5px;letter-spacing:0.00px;color:#3b4357;z-index:3;-webkit-text-stroke:0.4px #3b4357">Pl</div>
<svg class="a" style="left:145.0px;top:32.0px;z-index:3" width="28" height="24" viewBox="0 0 28 24"><path d="M13.6 20.6V3M5.4 11.4L13.6 3.2l8.6 8.2" fill="none" stroke="#3b4357" stroke-width="2.7" stroke-linecap="round" stroke-linejoin="round"/></svg>
<div class="t" style="left:1884.40px;top:868.06px;font-size:24.5px;letter-spacing:0.26px;color:#1e2024;">Page Size:</div>
<div class="a" style="left:2021.0px;top:844.0px;width:90px;height:72px;border:1px solid #e8e8e8;border-radius:8px"></div>
<div class="t" style="left:2038.10px;top:868.06px;font-size:24.5px;letter-spacing:0.40px;color:#1e2024;">50</div>
<svg class="a" style="left:2074.0px;top:875.0px" width="16" height="12" viewBox="0 0 16 12"><path d="M0 0.4h15.2L7.6 10.8z" fill="#1e2024"/></svg>
<div class="t" style="left:2169.10px;top:868.06px;font-size:24.5px;letter-spacing:0.00px;color:#1e2024;;-webkit-text-stroke:0.7px #1e2024">1</div>
<div class="t" style="left:2189.60px;top:868.06px;font-size:24.5px;letter-spacing:1.54px;color:#1e2024;">to</div>
<div class="t" style="left:2222.80px;top:868.06px;font-size:24.5px;letter-spacing:0.20px;color:#1e2024;;-webkit-text-stroke:0.7px #1e2024">50</div>
<div class="t" style="left:2261.30px;top:868.06px;font-size:24.5px;letter-spacing:2.84px;color:#1e2024;">of</div>
<div class="t" style="left:2293.00px;top:868.06px;font-size:24.5px;letter-spacing:-0.61px;color:#1e2024;;-webkit-text-stroke:0.7px #1e2024">102</div>
<div class="t" style="left:2494.90px;top:867.96px;font-size:24.5px;letter-spacing:-1.37px;color:#1e2024;">Page</div>
<div class="t" style="left:2558.50px;top:867.96px;font-size:24.5px;letter-spacing:0.00px;color:#1e2024;;-webkit-text-stroke:0.7px #1e2024">1</div>
<div class="t" style="left:2578.00px;top:867.96px;font-size:24.5px;letter-spacing:3.34px;color:#1e2024;">of</div>
<div class="t" style="left:2610.20px;top:867.96px;font-size:24.5px;letter-spacing:0.00px;color:#1e2024;;-webkit-text-stroke:0.7px #1e2024">3</div>
<svg class="a" style="left:2391.0px;top:864.0px" width="340" height="32" viewBox="2580 1340 340 32" fill="none" stroke-width="2.7" stroke-linecap="round" stroke-linejoin="round">
<path d="M2588.2 1348.4v15.6M2601.2 1348.4l-8 7.8 8 7.8" stroke="#c8c9cc"/>
<path d="M2649.6 1348.4l-8 7.8 8 7.8" stroke="#c8c9cc"/>
<path d="M2845.4 1348.4l8 7.8-8 7.8" stroke="#1e2024"/>
<path d="M2892.9 1348.4l8 7.8-8 7.8M2905.4 1348.4v15.6" stroke="#1e2024"/>
</svg>
</div>
<div class="t" style="left:203.90px;top:1418.23px;font-size:25px;letter-spacing:1.33px;color:#bdbdbd;">Data available through: 08/28/2025</div>
<div class="a" style="left:850px;top:1440px;width:1330px;height:70px;background:linear-gradient(180deg,rgba(20,25,40,0) 0%,rgba(20,25,40,0.025) 45%,rgba(20,25,40,0.085) 100%);-webkit-mask-image:linear-gradient(90deg,transparent 0%,#000 14%,#000 86%,transparent 100%)"></div>
<div class="a" style="left:0;top:1500px;width:1.5px;height:10px;background:#111"></div>
<div class="a" style="left:3022.5px;top:1500px;width:1.5px;height:10px;background:#111"></div>
<div class="a" style="left:2746px;top:1409px;width:235px;height:79px;border-radius:40px;background:#2f66e0;box-shadow:0 3px 8px rgba(0,0,0,0.18)"></div>
<svg class="a" style="left:2780px;top:1420px" width="60" height="55" viewBox="2780 1420 60 55" fill="#fff" stroke="#fff" stroke-width="1.8" stroke-linejoin="round">
<path d="M2812.20 1431.60L2817.20 1443.80L2827.50 1448.40L2817.20 1453.00L2812.20 1465.20L2807.20 1453.00L2796.90 1448.40L2807.20 1443.80Z"/><path d="M2798.10 1431.30L2799.90 1434.00L2802.60 1435.80L2799.90 1437.60L2798.10 1440.30L2796.30 1437.60L2793.60 1435.80L2796.30 1434.00Z"/><path d="M2799.80 1456.30L2801.60 1459.00L2804.30 1460.80L2801.60 1462.60L2799.80 1465.30L2798.00 1462.60L2795.30 1460.80L2798.00 1459.00Z"/></svg>
<div class="t" style="left:2847.00px;top:1434.16px;font-size:26.5px;letter-spacing:0.58px;color:#fff;-webkit-text-stroke:0.35px #fff">Ask Alli</div></body></html>
